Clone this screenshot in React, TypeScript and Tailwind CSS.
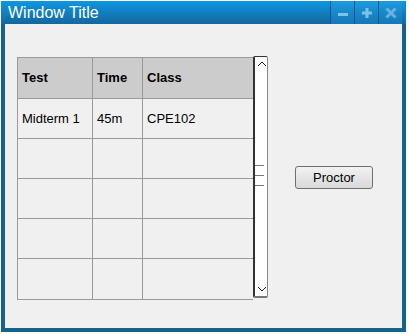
import React from "react";

const rows = [
  ["Midterm 1", "45m", "CPE102"],
  ["", "", ""],
  ["", "", ""],
  ["", "", ""],
  ["", "", ""],
];

export default function App() {
  return (
    <div className="w-[410px] h-[334px] bg-white pl-[1px] pt-[1px]" style={{ fontFamily: '"Liberation Sans", Arial, sans-serif' }}>
      <div className="w-[405px] h-[331px] bg-[#16628a] flex flex-col px-[4px] pb-[4px]">
        <div className="h-[23px] -mx-[4px] flex items-stretch justify-between bg-gradient-to-b from-[#0b97e2] to-[#13679e]">
          <div className="pl-[7px] pt-[3px] text-white text-[16px] leading-[18px]">Window Title</div>
          <div className="flex pr-[4px]">
            {[0, 1, 2].map((i) => (
              <div key={i} className="w-[24px] h-[23px] border-l border-[#0e5a8a] bg-gradient-to-b from-[#1b9ae0] to-[#1577b6] flex items-center justify-center">
                <svg width="12" height="12" viewBox="0 0 12 12">
                  {i === 0 && <rect x="1" y="6" width="10" height="3" fill="#7cc3ea" />}
                  {i === 1 && (
                    <g fill="#7cc3ea">
                      <rect x="1" y="4.5" width="10" height="3" />
                      <rect x="4.5" y="1" width="3" height="10" />
                    </g>
                  )}
                  {i === 2 && (
                    <g stroke="#6fb8e2" strokeWidth="3" strokeLinecap="square" opacity="0.9">
                      <line x1="2.5" y1="2.5" x2="9.5" y2="9.5" />
                      <line x1="9.5" y1="2.5" x2="2.5" y2="9.5" />
                    </g>
                  )}
                </svg>
              </div>
            ))}
          </div>
        </div>
        <div className="flex-1 bg-[#f0f0f0] flex items-start pl-[12px] pt-[32px]">
          <div className="flex items-start">
            <div className="mt-[1px] border border-[#9a9a9a] border-r-0">
              <div className="flex h-[41px] bg-[#cccccc] border-b border-[#9a9a9a] font-bold text-[13px] text-black">
                <div className="w-[75px] border-r border-[#9a9a9a] flex items-center pl-[4px]">Test</div>
                <div className="w-[50px] border-r border-[#9a9a9a] flex items-center pl-[4px]">Time</div>
                <div className="w-[110px] flex items-center pl-[4px]">Class</div>
              </div>
              {rows.map((r, idx) => (
                <div key={idx} className={`flex h-[40px] text-[13px] text-black ${idx < rows.length - 1 ? "border-b border-[#9a9a9a]" : ""}`}>
                  <div className="w-[75px] border-r border-[#9a9a9a] flex items-center pl-[4px]">{r[0]}</div>
                  <div className="w-[50px] border-r border-[#9a9a9a] flex items-center pl-[4px]">{r[1]}</div>
                  <div className="w-[110px] flex items-center pl-[4px]">{r[2]}</div>
                </div>
              ))}
            </div>
            <div className="relative w-[15px] h-[242px] bg-white border border-l-2 border-[#333] border-r-[#888] border-b-2 border-b-[#777] rounded-[2px]">
              <svg className="absolute left-[2px] top-[3px]" width="10" height="7" viewBox="0 0 10 7">
                <polyline points="1,6 5,2 9,6" fill="none" stroke="#222" strokeWidth="1" />
              </svg>
              <svg className="absolute left-[2px] bottom-[3px]" width="10" height="7" viewBox="0 0 10 7">
                <polyline points="1,1 5,5 9,1" fill="none" stroke="#222" strokeWidth="1" />
              </svg>
              <div className="absolute left-0 top-[108px] w-[9px] flex flex-col gap-[9px]">
                <div className="h-[1px] bg-[#777]" />
                <div className="h-[1px] bg-[#777]" />
                <div className="h-[1px] bg-[#777]" />
              </div>
            </div>
          </div>
          <div className="ml-[27px] mt-[109px]">
            <button className="w-[78px] h-[23px] rounded-[3px] border border-[#707070] bg-gradient-to-b from-[#f2f2f2] to-[#d9d9d9] text-[13px] text-black leading-none">
              Proctor
            </button>
          </div>
        </div>
      </div>
    </div>
  );
}
